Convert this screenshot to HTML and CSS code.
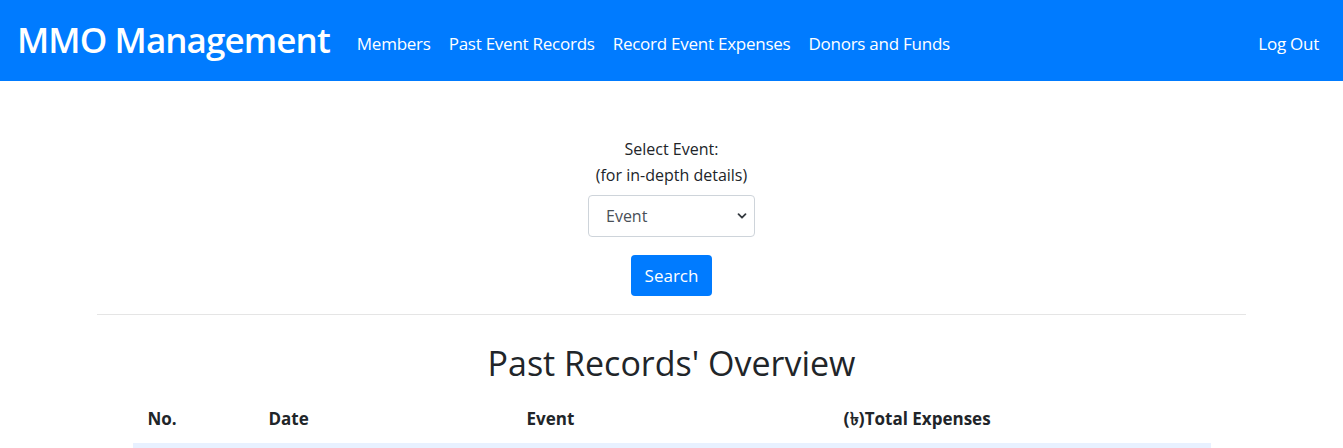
FILE: index.html
```html
<!DOCTYPE html>
<html lang="en">
<head>
<meta charset="utf-8">
<title>MMO Management</title>
<link rel="stylesheet" href="styles.css">
</head>
<body>
<nav class="navbar">
  <a class="brand" href="#">MMO Management</a>
  <ul class="nav-links">
    <li><a href="#">Members</a></li>
    <li><a href="#">Past Event Records</a></li>
    <li><a href="#">Record Event Expenses</a></li>
    <li><a href="#">Donors and Funds</a></li>
  </ul>
  <a class="logout" href="#">Log Out</a>
</nav>
<main class="container">
  <form class="search-form">
    <label class="label" for="event">Select Event:<br>(for in-depth details)</label>
    <div class="select-wrap">
      <select id="event" class="select">
        <option>Event</option>
      </select>
      <svg class="chev" width="10" height="8" viewBox="0 0 10 8"><path d="M1.5 2.2 L5 5.7 L8.5 2.2" fill="none" stroke="#343a40" stroke-width="1.8" stroke-linecap="round" stroke-linejoin="round"/></svg>
    </div>
    <button type="button" class="btn">Search</button>
  </form>
  <hr class="divider">
  <h1 class="title">Past Records' Overview</h1>
  <table class="table">
    <thead>
      <tr>
        <th class="c1">No.</th>
        <th class="c2">Date</th>
        <th class="c3">Event</th>
        <th class="c4"><span class="taka">(৳)</span>Total Expenses</th>
      </tr>
    </thead>
    <tbody>
      <tr class="row"><td></td><td></td><td></td><td></td></tr>
    </tbody>
  </table>
</main>
</body>
</html>
```
FILE: styles.css
```css
* { box-sizing: border-box; }
html, body { margin: 0; padding: 0; }
body {
  font-family: "Open Sans", "Noto Sans", sans-serif;
  color: #212529;
  background: #fff;
}
a { text-decoration: none; }
.navbar {
  height: 81px;
  background: #007bff;
  display: flex;
  align-items: center;
  padding: 0 24px 0 17px;
}
.brand {
  color: #fff;
  font-size: 35px;
  font-weight: 600;
  margin-right: 27px;
  letter-spacing: -0.9px;
  padding-bottom: 2px;
}
.nav-links {
  list-style: none;
  display: flex;
  margin: 0;
  padding: 0;
  flex: 1;
  gap: 18px;
  padding-top: 6px;
}
.nav-links a, .logout {
  color: #fff;
  font-size: 17px;
  letter-spacing: -0.25px;
}
.logout { padding-top: 6px; }
.container {
  width: 1149px;
  margin: 0 auto;
}
.search-form {
  display: flex;
  flex-direction: column;
  align-items: center;
  margin-top: 55px;
}
.label {
  text-align: center;
  font-size: 16px;
  line-height: 26px;
  color: #212529;
}
.select-wrap {
  position: relative;
  margin-top: 7px;
}
.select {
  width: 167px;
  height: 42px;
  border: 1px solid #ced4da;
  border-radius: 4px;
  background: #fff;
  color: #495057;
  font-family: inherit;
  font-size: 16px;
  padding: 0 17px;
  appearance: none;
  -webkit-appearance: none;
}
.chev { position: absolute; right: 8px; top: 17px; }
.btn {
  margin-top: 18px;
  width: 81px;
  height: 41px;
  border: none;
  border-radius: 4px;
  background: #007bff;
  color: #fff;
  font-family: inherit;
  font-size: 17px;
}
.divider {
  border: 0;
  border-top: 1px solid #e5e5e5;
  margin: 18px 0 0;
}
.title {
  text-align: center;
  font-size: 34px;
  font-weight: 500;
  margin: 24px 0 0;
  line-height: 48px;
}
.table {
  width: 1078px;
  margin: 8px auto 0;
  border-collapse: collapse;
}
.table th {
  text-align: left;
  font-size: 17px;
  font-weight: 700;
  padding: 12px 15px;
  line-height: 24px;
  vertical-align: middle;
}
.taka { font-size: 18px; line-height: 1; }
.c1 { width: 121px; }
.c2 { width: 258px; }
.c3 { width: 317px; }
.c4 { width: 382px; }
.row td { background: #e8f1ff; height: 40px; }
```
